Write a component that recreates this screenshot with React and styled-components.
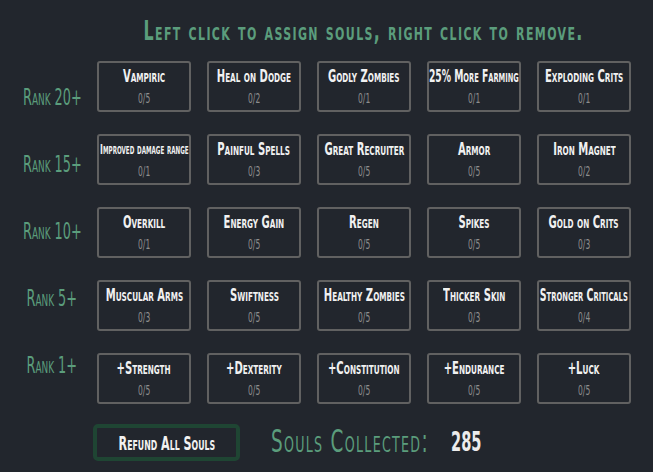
import React from "react";
import styled, { createGlobalStyle } from "styled-components";

const GlobalStyle = createGlobalStyle`
  html, body { margin: 0; padding: 0; background: #22262d; }
  body { font-family: "DejaVu Sans Condensed", "DejaVu Sans", sans-serif; }
`;

const Page = styled.div`
  width: 653px;
  height: 472px;
  background: #22262d;
  display: flex;
  flex-direction: column;
  box-sizing: border-box;
  overflow: hidden;
`;

/* Narrow display face: the condensed font squeezed further horizontally */
const Narrow = styled.span`
  display: inline-block;
  white-space: nowrap;
  transform: scaleX(${(p) => p.$sx || 0.62});
  transform-origin: ${(p) => p.$origin || "center"};
`;

const Title = styled.div`
  margin: 14px 0 0 97px;
  width: 534px;
  height: 34px;
  line-height: 34px;
  color: #5b9d7c;
  font-size: 26px;
  font-weight: bold;
  font-variant: small-caps;
  letter-spacing: 2px;
  white-space: nowrap;
  display: flex;
  justify-content: center;
`;

const Body = styled.div`
  display: flex;
  margin-top: 13px;
`;

const Labels = styled.div`
  width: 90px;
  padding-left: 7px;
  padding-top: 24px;
  display: flex;
  flex-direction: column;
  gap: 42px;
`;

const RankLabel = styled.div`
  height: 25px;
  line-height: 25px;
  display: flex;
  justify-content: center;
  color: #5b9d7c;
  font-size: 23px;
  font-variant: small-caps;
  white-space: nowrap;
`;

const Grid = styled.div`
  display: grid;
  grid-template-columns: repeat(5, 94px);
  grid-auto-rows: 51px;
  column-gap: 16px;
  row-gap: 22px;
`;

const Card = styled.div`
  box-sizing: border-box;
  border: 2px solid #616161;
  border-radius: 3px;
  display: flex;
  flex-direction: column;
  align-items: center;
  padding-top: 3px;
  cursor: pointer;
`;

const CardName = styled.div`
  color: #f1f1f1;
  font-size: ${(p) => (p.$small ? "14px" : "18px")};
  font-weight: bold;
  font-variant: small-caps;
  height: 20px;
  line-height: 20px;
  width: 100%;
  display: flex;
  justify-content: center;
  white-space: nowrap;
`;

const CardCount = styled.div`
  color: #8e8e8e;
  font-size: 14px;
  height: 14px;
  line-height: 14px;
  margin-top: 5px;
  display: flex;
  justify-content: center;
`;

const Footer = styled.div`
  display: flex;
  align-items: center;
  margin: 18px 0 0 93px;
`;

const RefundButton = styled.button`
  width: 147px;
  height: 37px;
  box-sizing: border-box;
  background: #22262d;
  border: 4px solid #1f4533;
  border-radius: 5px;
  color: #f1f1f1;
  font-family: inherit;
  font-size: 20px;
  font-weight: bold;
  font-variant: small-caps;
  padding: 0;
  display: flex;
  align-items: center;
  justify-content: center;
  cursor: pointer;
`;

const SoulsLabel = styled.div`
  margin-left: 31px;
  margin-bottom: 3px;
  width: 180px;
  color: #5b9d7c;
  font-size: 32px;
  font-variant: small-caps;
  letter-spacing: 2px;
  white-space: nowrap;
`;

const SoulsValue = styled.div`
  margin-bottom: 3px;
  color: #ececec;
  font-size: 27px;
  font-weight: bold;
  white-space: nowrap;
`;

const ranks = ["Rank 20+", "Rank 15+", "Rank 10+", "Rank 5+", "Rank 1+"];

// [name, count, small text, horizontal squeeze]
const perks = [
  ["Vampiric", "0/5"],
  ["Heal on Dodge", "0/2"],
  ["Godly Zombies", "0/1"],
  ["25% More Farming", "0/1", false, 0.57],
  ["Exploding Crits", "0/1"],
  ["Improved damage range", "0/1", true],
  ["Painful Spells", "0/3"],
  ["Great Recruiter", "0/5"],
  ["Armor", "0/5"],
  ["Iron Magnet", "0/2"],
  ["Overkill", "0/1"],
  ["Energy Gain", "0/5"],
  ["Regen", "0/5"],
  ["Spikes", "0/5"],
  ["Gold on Crits", "0/3"],
  ["Muscular Arms", "0/3"],
  ["Swiftness", "0/5"],
  ["Healthy Zombies", "0/5"],
  ["Thicker Skin", "0/3"],
  ["Stronger Criticals", "0/4", false, 0.58],
  ["+Strength", "0/5"],
  ["+Dexterity", "0/5"],
  ["+Constitution", "0/5"],
  ["+Endurance", "0/5"],
  ["+Luck", "0/5"],
];

export default function App() {
  return (
    <Page>
      <GlobalStyle />
      <Title>
        <Narrow $sx={0.68}>Left click to assign souls, right click to remove.</Narrow>
      </Title>
      <Body>
        <Labels>
          {ranks.map((r) => (
            <RankLabel key={r}>
              <Narrow>{r}</Narrow>
            </RankLabel>
          ))}
        </Labels>
        <Grid>
          {perks.map(([name, count, small, sx]) => (
            <Card key={name}>
              <CardName $small={small}>
                <Narrow $sx={sx}>{name}</Narrow>
              </CardName>
              <CardCount>
                <Narrow $sx={0.6}>{count}</Narrow>
              </CardCount>
            </Card>
          ))}
        </Grid>
      </Body>
      <Footer>
        <RefundButton>
          <Narrow>Refund All Souls</Narrow>
        </RefundButton>
        <SoulsLabel>
          <Narrow $sx={0.64} $origin="left">Souls Collected:</Narrow>
        </SoulsLabel>
        <SoulsValue>
          <Narrow $sx={0.6} $origin="left">285</Narrow>
        </SoulsValue>
      </Footer>
    </Page>
  );
}
